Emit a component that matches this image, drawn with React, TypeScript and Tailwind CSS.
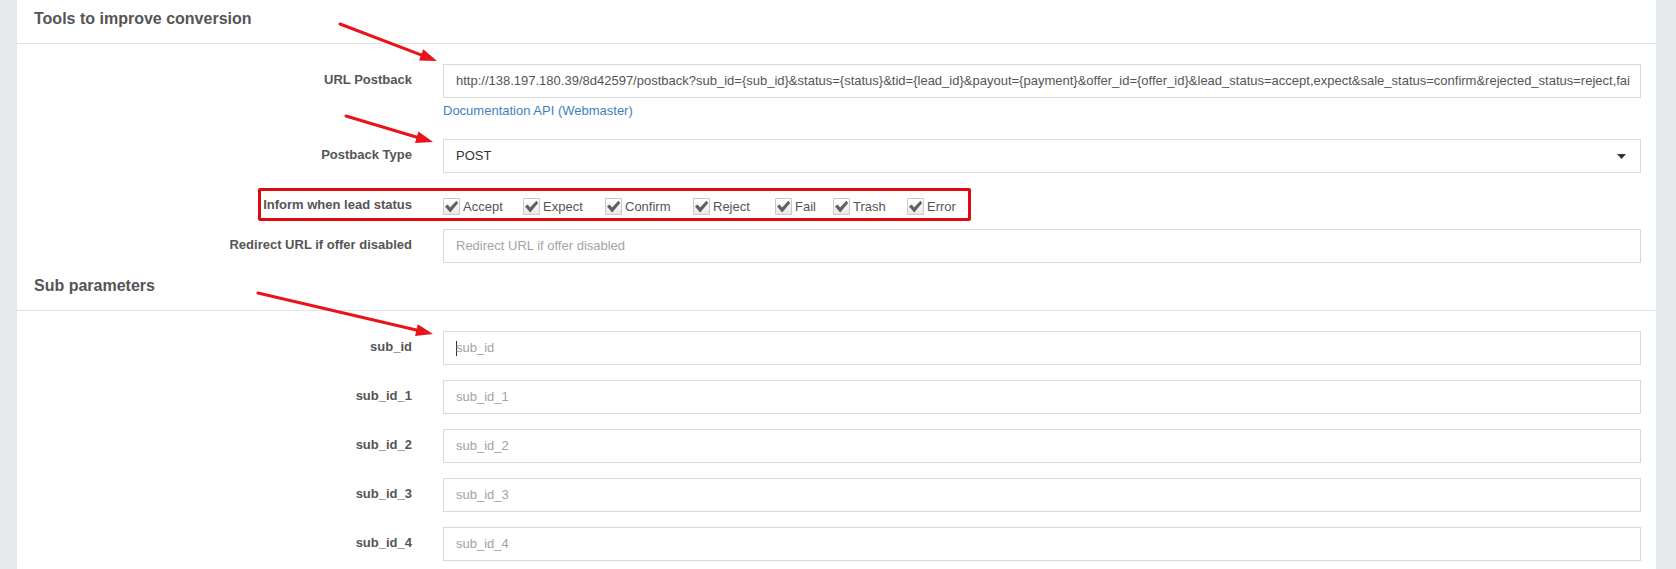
import React from "react";

const FONT = { fontFamily: '"Liberation Sans", Arial, sans-serif' };

const URL_VALUE =
  "http://138.197.180.39/8d42597/postback?sub_id={sub_id}&status={status}&tid={lead_id}&payout={payment}&offer_id={offer_id}&lead_status=accept,expect&sale_status=confirm&rejected_status=reject,fai";

function Label({ children }: { children: React.ReactNode }) {
  return (
    <div className="w-[395px] shrink-0 pr-0 text-right text-[13px] font-bold leading-[18px] text-[#555] pb-[2px]">
      {children}
    </div>
  );
}

function Box({ children, className = "" }: { children?: React.ReactNode; className?: string }) {
  return (
    <div
      className={
        "ml-[31px] flex h-[34px] w-[1198px] items-center overflow-hidden whitespace-nowrap border border-[#d9d9d9] bg-white px-[12px] text-[13px] " +
        className
      }
    >
      {children}
    </div>
  );
}

function Check() {
  return (
    <span className="flex h-[17px] w-[17px] shrink-0 items-center justify-center rounded-[1px] border border-[#c9c9c9] bg-gradient-to-b from-[#ffffff] to-[#e9e9e9]">
      <svg width="15" height="15" viewBox="0 0 15 15">
        <path d="M1 7.4 L3.6 5.6 L6.1 8.6 L12.4 1.8 L14.2 4 L6.2 13.4 Z" fill="#606060" />
      </svg>
    </span>
  );
}

const STATUSES: { name: string; w: string }[] = [
  { name: "Accept", w: "w-[80px]" },
  { name: "Expect", w: "w-[82px]" },
  { name: "Confirm", w: "w-[88px]" },
  { name: "Reject", w: "w-[82px]" },
  { name: "Fail", w: "w-[58px]" },
  { name: "Trash", w: "w-[74px]" },
  { name: "Error", w: "w-auto" },
];

function Arrow({ x1, y1, x2, y2 }: { x1: number; y1: number; x2: number; y2: number }) {
  const dx = x2 - x1;
  const dy = y2 - y1;
  const len = Math.hypot(dx, dy);
  const ux = dx / len;
  const uy = dy / len;
  const hl = 17;
  const hw = 6;
  const bx = x2 - ux * hl;
  const by = y2 - uy * hl;
  const px = -uy;
  const py = ux;
  const pts = `${x2},${y2} ${bx + px * hw},${by + py * hw} ${bx - px * hw},${by - py * hw}`;
  return (
    <g>
      <line x1={x1} y1={y1} x2={bx + ux * 2} y2={by + uy * 2} stroke="#e8141a" strokeWidth={3} strokeLinecap="round" />
      <polygon points={pts} fill="#e8141a" />
    </g>
  );
}

export default function App() {
  return (
    <div style={FONT} className="relative flex h-[569px] w-[1676px] overflow-hidden bg-[#e6e9ec]">
      <div className="ml-[17px] w-[1639px] bg-white">
        {/* Header 1 */}
        <div className="h-[44px] border-b border-[#e2e2e2] pl-[17px] pt-[9px] text-[16px] font-bold leading-[20px] text-[#555]">
          Tools to improve conversion
        </div>

        <div className="pt-[20px]">
          {/* URL Postback */}
          <div className="flex items-center">
            <Label>URL Postback</Label>
            <Box className="text-[#555]">
              <span>{URL_VALUE}</span>
            </Box>
          </div>
          <div className="ml-[426px] mt-[4px] text-[13px] leading-[18px] text-[#3f7fbf]">
            Documentation API (Webmaster)
          </div>

          {/* Postback Type */}
          <div className="mt-[19px] flex items-center">
            <Label>Postback Type</Label>
            <Box className="justify-between text-[#333]">
              <span>POST</span>
              <svg width="9" height="5" viewBox="0 0 9 5" className="mr-[2px]">
                <path d="M0 0 L9 0 L4.5 5 Z" fill="#333" />
              </svg>
            </Box>
          </div>

          {/* Inform when lead status */}
          <div className="mt-[16px] flex h-[34px] items-center">
            <Label>Inform when lead status</Label>
            <div className="ml-[31px] flex items-center text-[13px] text-[#555]">
              {STATUSES.map((s) => (
                <div key={s.name} className={"flex items-center " + s.w}>
                  <Check />
                  <span className="ml-[3px] leading-[17px]">{s.name}</span>
                </div>
              ))}
            </div>
          </div>

          {/* Redirect */}
          <div className="mt-[6px] flex items-center">
            <Label>Redirect URL if offer disabled</Label>
            <Box className="text-[#a3a3a3]">Redirect URL if offer disabled</Box>
          </div>
        </div>

        {/* Header 2 */}
        <div className="h-[48px] border-b border-[#e2e2e2] pl-[17px] pt-[13px] text-[16px] font-bold leading-[20px] text-[#555]">
          Sub parameters
        </div>

        <div className="flex flex-col gap-[15px] pt-[20px]">
          {["sub_id", "sub_id_1", "sub_id_2", "sub_id_3", "sub_id_4"].map((n, i) => (
            <div key={n} className="flex items-center">
              <Label>{n}</Label>
              <Box className="text-[#a3a3a3]">
                {i === 0 && <span className="-mr-px inline-block h-[15px] w-px bg-[#333]" />}
                {n}
              </Box>
            </div>
          ))}
        </div>
      </div>

      {/* Annotations */}
      <div className="pointer-events-none absolute left-[258px] top-[188px] h-[33px] w-[713px] rounded-[2px] border-[3px] border-[#dc0a0f]" />
      <svg className="pointer-events-none absolute left-0 top-0" width="1676" height="569">
        <Arrow x1={340} y1={24} x2={437} y2={61} />
        <Arrow x1={346} y1={116} x2={433} y2={142} />
        <Arrow x1={258} y1={293} x2={433} y2={334} />
      </svg>
    </div>
  );
}
